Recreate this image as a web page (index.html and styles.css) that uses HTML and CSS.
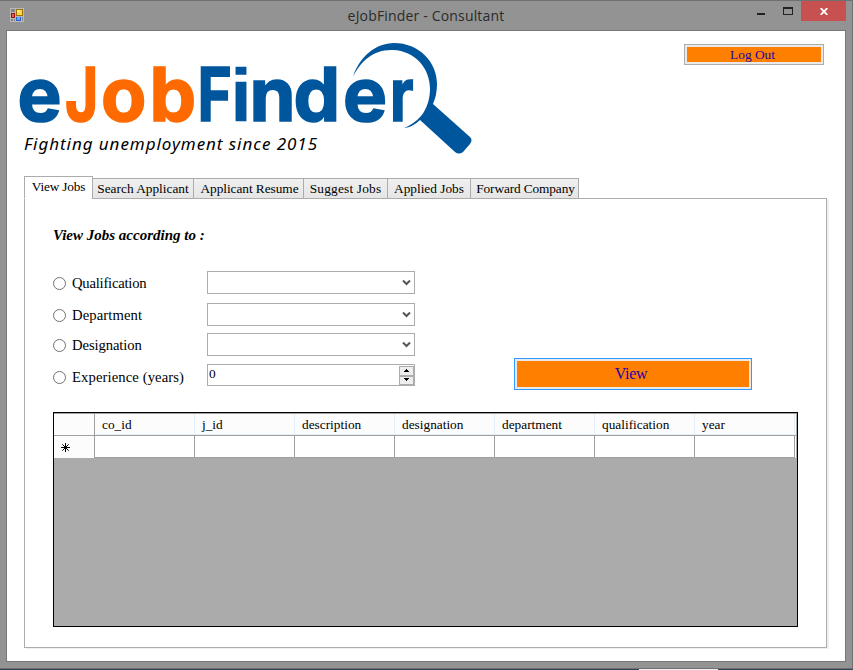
FILE: index.html
```html
<!DOCTYPE html>
<html lang="en">
<head>
<meta charset="utf-8">
<title>eJobFinder - Consultant</title>
<link rel="stylesheet" href="styles.css">
</head>
<body>
<div class="window">
  <header class="titlebar">
    <svg class="app-icon" width="14" height="14" viewBox="0 0 14 14" shape-rendering="crispEdges">
      <rect width="14" height="14" fill="#b9b9b9"/>
      <path d="M1 1h4v3H1zM1 11h2v2H1zM4 11h1v2H4zM12 9h1v4h-1z" fill="#858585"/>
      <rect x="6" y="1" width="7" height="7" fill="#9c7208"/><rect x="7" y="2" width="5" height="5" fill="#ffd646"/><rect x="7" y="2" width="3" height="2" fill="#ffe995"/>
      <rect x="1" y="5" width="4" height="5" fill="#991510"/><rect x="2" y="6" width="2" height="3" fill="#e85a50"/>
      <rect x="6" y="9" width="5" height="4" fill="#2865c8"/><rect x="7" y="9" width="3" height="3" fill="#65a4ff"/>
    </svg>
    <h1 class="title">eJobFinder - Consultant</h1>
    <div class="controls">
      <svg width="60" height="20" viewBox="0 0 60 20" shape-rendering="crispEdges"><path d="M16 12h8v2h-8z" fill="#222"/><path d="M42 6h10v8H42zM43 8v5h8V8z" fill="#222" fill-rule="evenodd"/></svg>
      <button class="close" aria-label="Close"><svg width="8" height="7" viewBox="0 0 8 7"><path d="M.7.2 7.3 6.8M7.3.2.7 6.8" stroke="#fff" stroke-width="1.9"/></svg></button>
    </div>
  </header>
  <main class="client">
    <div class="brand-row">
      <svg class="logo" width="460" height="130" viewBox="17 36 460 130">
        <g class="wordmark">
          <text y="121" x="17.5">e</text><text transform="translate(65 121) scale(.77 1)" class="orange">J</text><text y="121" x="101 149.5" class="orange">ob</text><text transform="translate(197.5 121) scale(.79 1)">F</text><text x="230.8" y="121" class="square">i</text><text y="121" x="249.5 293.5 343">nde</text><text transform="translate(390 121) scale(.78 1)">r</text>
        </g>
        <path d="M353 77C359 57 376 43 394 43C419 43 437 62 437 84Q437 95 433 104L470 137Q473 140 470 144L463 152Q459 155 455 152L420 120Q413 127 404 128Q414 124 421 116C427 109 430 98 430 89C430 68 415 51 393 50C375 49 361 60 353 77Z" fill="#00569c"/>
        <text class="tagline" x="24" y="150" textLength="293">Fighting unemployment since 2015</text>
      </svg>
      <button class="action logout">Log Out</button>
    </div>
    <nav class="tabs">
      <span class="tab active t1">View Jobs</span><span class="tab t2">Search Applicant</span><span class="tab t3">Applicant Resume</span><span class="tab t4">Suggest Jobs</span><span class="tab t5">Applied Jobs</span><span class="tab t6">Forward Company</span>
    </nav>
    <section class="panel">
      <h2 class="heading">View Jobs according to :</h2>
      <div class="form-row">
        <div class="fields">
          <label class="choice"><i class="radio"></i><span class="q">Qualification</span></label><div class="combo"><svg width="9" height="6" viewBox="0 0 9 6"><path d="M1 .5 4.5 4 8 .5" fill="none" stroke="#555" stroke-width="2"/></svg></div>
          <label class="choice"><i class="radio"></i><span class="dep">Department</span></label><div class="combo"><svg width="9" height="6" viewBox="0 0 9 6"><path d="M1 .5 4.5 4 8 .5" fill="none" stroke="#555" stroke-width="2"/></svg></div>
          <label class="choice"><i class="radio"></i><span class="des">Designation</span></label><div class="combo"><svg width="9" height="6" viewBox="0 0 9 6"><path d="M1 .5 4.5 4 8 .5" fill="none" stroke="#555" stroke-width="2"/></svg></div>
          <label class="choice last"><i class="radio"></i><span class="exp">Experience (years)</span></label>
          <div class="spinner"><span>0</span><svg width="15" height="19" viewBox="0 0 15 19" shape-rendering="crispEdges"><path d="M0 0h15v19H0z" fill="#acacac"/><path d="M1 1h13v8H1zM1 11h13v7H1z" fill="#eee"/><path d="M7 3h1v1h1v1h1v1H5V5h1V4h1zM5 12h5v1H9v1H8v1H7v-1H6v-1H5z" fill="#000"/></svg></div>
        </div>
        <button class="action view">View</button>
      </div>
      <div class="grid">
        <div class="row head"><b></b><span>co_id</span><span>j_id</span><span>description</span><span>designation</span><span>department</span><span>qualification</span><span>year</span></div>
        <div class="row"><b><svg width="9" height="9" viewBox="0 0 9 9"><path d="M4.5 0v9M0 4.5h9M1.3 1.3l6.4 6.4M7.7 1.3 1.3 7.7" stroke="#000"/></svg></b><span></span><span></span><span></span><span></span><span></span><span></span><span></span></div>
      </div>
    </section>
  </main>
</div>
<footer class="taskbar"><i></i></footer>
</body>
</html>
```
FILE: styles.css
```css
* { box-sizing: border-box; }
body {
  margin: 0;
  width: 853px;
  height: 670px;
  overflow: hidden;
  background: #939393;
  font-family: "Liberation Serif", serif;
  color: #000;
}
button { font-family: inherit; padding: 0; }
svg { flex: none; }
.window {
  height: 669px;
  border-top: 1px solid #707070;
  border-right: 1px solid #707070;
  border-bottom: 1px solid #707070;
  padding: 0 6px 6px;
}
.titlebar {
  height: 29px;
  display: grid;
  grid-template-columns: 114px 1fr 120px;
  margin-right: -6px;
}
.app-icon { margin: 7px 0 0 4px; }
.title {
  margin: 4px 0 0;
  text-align: center;
  font: 14px/22px "Open Sans", sans-serif;
  letter-spacing: 0.17px;
  color: #2b2b2b;
}
.controls { display: flex; justify-content: flex-end; padding-right: 6px; }
.close {
  flex: none;
  width: 45px;
  height: 20px;
  border: 0;
  background: #c75050;
  display: flex;
  align-items: center;
  justify-content: center;
}
.client {
  height: 632px;
  border: 1px solid #777;
  background: #fff;
  padding: 0 18px 0 17px;
}
.brand-row {
  height: 145px;
  display: flex;
  justify-content: space-between;
  align-items: flex-start;
}
.logo { margin: 5px 0 0 -7px; }
.wordmark { font: bold 74px Inter, sans-serif; fill: #00569c; stroke: #00569c; stroke-width: 1.6px; }
.wordmark .orange { fill: #ff6a00; stroke: #ff6a00; }
.wordmark .square { font-family: "Liberation Sans", sans-serif; stroke-width: 0.6px; }
.tagline { font: italic 17px "Noto Sans", sans-serif; fill: #000; }
.action {
  border: 1px solid #adadad;
  background: #ff8000;
  box-shadow: inset 0 0 0 2px #e9e9e9;
  color: #1c00a8;
}
.logout { width: 140px; height: 21px; margin: 13px 3px 0 0; padding-right: 3px; font-size: 13.33px; line-height: 19px; }
.tabs { display: flex; align-items: flex-end; height: 23px; margin-bottom: -1px; position: relative; }
.tab {
  height: 21px;
  border: 1px solid #acacac;
  background: linear-gradient(#f0f0f0, #e5e5e5);
  font-size: 13.33px;
  line-height: 20px;
  text-align: center;
  white-space: nowrap;
  margin-left: -1px;
}
.tab.active { height: 23px; margin: 0; background: #fff; border-bottom-color: #fff; line-height: 20px; }
.t1 { width: 69px; letter-spacing: -0.2px; }
.t2 { width: 102px; }
.t3 { width: 111px; padding-left: 2px; letter-spacing: -0.05px; }
.t4 { width: 85px; letter-spacing: 0.2px; }
.t5 { width: 84px; }
.t6 { width: 109px; padding-left: 2px; letter-spacing: -0.12px; }
.panel {
  width: 803px;
  height: 450px;
  border: 1px solid #acacac;
  box-shadow: 2px 1px 0 #f0f0f0;
  padding: 26px 28px;
}
.heading { margin: 0; font: italic bold 15px/20px "Liberation Serif", serif; }
.form-row { display: flex; justify-content: space-between; margin-top: 26px; }
.fields {
  display: grid;
  grid-template-columns: 154px 208px;
  grid-template-rows: 32px 30px 31px 24px;
}
.choice { display: flex; align-items: center; height: 24px; gap: 6px; font-size: 14.67px; }
.choice.last { height: 26px; }
.q { letter-spacing: -0.23px; }
.dep { letter-spacing: 0.1px; }
.des { letter-spacing: -0.1px; }
.exp { letter-spacing: 0.1px; }
.radio { width: 13px; height: 13px; border: 1px solid #707070; border-radius: 50%; }
.combo {
  height: 23px;
  border: 1px solid #acacac;
  display: flex;
  align-items: center;
  justify-content: flex-end;
  padding: 1px 3px 0 0;
}
.spinner {
  height: 22px;
  border: 1px solid #acacac;
  display: flex;
  justify-content: space-between;
  padding: 1px 0 0 1px;
  font-size: 13.33px;
  line-height: 16px;
}
.view { width: 238px; height: 32px; margin: 87px 46px 0 0; padding-right: 4px; border-color: #3399ff; font-size: 16px; line-height: 28px; letter-spacing: -0.3px; }
.grid { width: 745px; height: 215px; margin-top: 22px; border: 1px solid #000; background: #ababab; overflow: hidden; }
.row { display: flex; height: 22px; width: 742px; background: #fff; }
.row > b { width: 41px; background: #fcfcfc; border-right: 1px solid #a0a0a0; display: flex; align-items: center; padding-left: 7px; }
.row > span { width: 100px; border-right: 1px solid #a0a0a0; border-bottom: 1px solid #a0a0a0; }
.head { height: 23px; border-top: 1px solid #a0a0a0; border-bottom: 1px solid #a0a0a0; background: #fcfcfc; }
.head > span { border-right-color: #e3eefa; border-bottom-color: #e3eefa; padding-left: 7px; font-size: 13.33px; line-height: 21px; }
.taskbar { height: 1px; background: #35435a; padding-left: 639px; }
.taskbar i { display: block; width: 79px; height: 1px; background: #eee; }
```
